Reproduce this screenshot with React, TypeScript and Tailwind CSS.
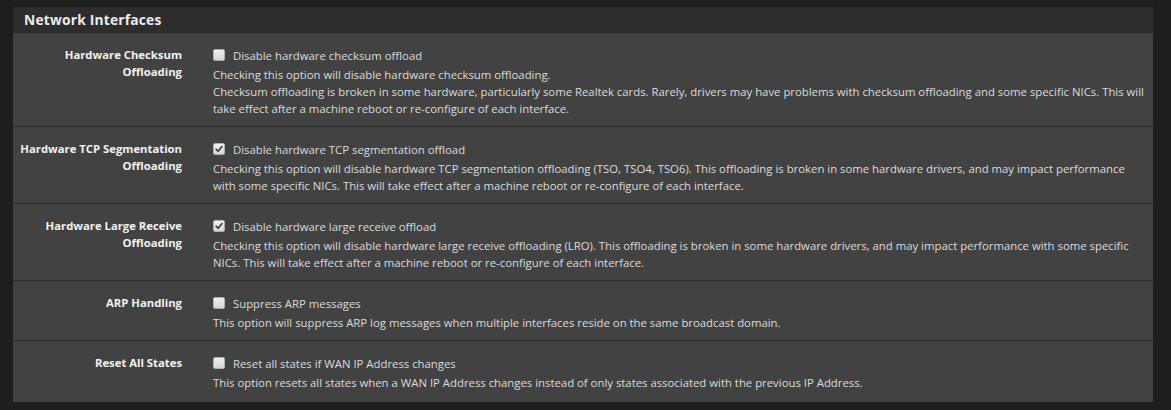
import React from 'react';

type Row = {
  label: string[];
  option: string;
  checked: boolean;
  help: string[];
};

const rows: Row[] = [
  {
    label: ['Hardware Checksum', 'Offloading'],
    option: 'Disable hardware checksum offload',
    checked: false,
    help: [
      'Checking this option will disable hardware checksum offloading.',
      'Checksum offloading is broken in some hardware, particularly some Realtek cards. Rarely, drivers may have problems with checksum offloading and some specific NICs. This will',
      'take effect after a machine reboot or re-configure of each interface.',
    ],
  },
  {
    label: ['Hardware TCP Segmentation', 'Offloading'],
    option: 'Disable hardware TCP segmentation offload',
    checked: true,
    help: [
      'Checking this option will disable hardware TCP segmentation offloading (TSO, TSO4, TSO6). This offloading is broken in some hardware drivers, and may impact performance',
      'with some specific NICs. This will take effect after a machine reboot or re-configure of each interface.',
    ],
  },
  {
    label: ['Hardware Large Receive', 'Offloading'],
    option: 'Disable hardware large receive offload',
    checked: true,
    help: [
      'Checking this option will disable hardware large receive offloading (LRO). This offloading is broken in some hardware drivers, and may impact performance with some specific',
      'NICs. This will take effect after a machine reboot or re-configure of each interface.',
    ],
  },
  {
    label: ['ARP Handling'],
    option: 'Suppress ARP messages',
    checked: false,
    help: ['This option will suppress ARP log messages when multiple interfaces reside on the same broadcast domain.'],
  },
  {
    label: ['Reset All States'],
    option: 'Reset all states if WAN IP Address changes',
    checked: false,
    help: ['This option resets all states when a WAN IP Address changes instead of only states associated with the previous IP Address.'],
  },
];

function Checkbox({ checked }: { checked: boolean }) {
  return (
    <span className="w-[12px] h-[12px] rounded-[2px] bg-gradient-to-b from-[#f0f0f0] to-[#d6d6d6] border border-[#b0b0b0] flex items-center justify-center shrink-0">
      {checked && (
        <svg viewBox="0 0 12 12" className="w-[10px] h-[10px]">
          <path d="M2.5 6.2 L5 8.6 L9.6 3" fill="none" stroke="#333" strokeWidth="1.8" strokeLinecap="round" strokeLinejoin="round" />
        </svg>
      )}
    </span>
  );
}

export default function App() {
  return (
    <div className="w-[1171px] h-[410px] bg-[#1e1e1e] pt-[7px] pl-[13px] font-['Open_Sans',sans-serif] text-[11.35px] leading-[17px]">
      <div className="w-[1140px] bg-[#424242]">
        <div className="h-[26px] bg-[#2d2d2d] border-b border-[#2a2a2a] px-[11px] flex items-center">
          <h2 className="text-[13.8px] font-bold text-[#ececec] tracking-[0.2px]">Network Interfaces</h2>
        </div>
        {rows.map((row, i) => (
          <div
            key={i}
            className={`flex pt-[12px] ${i === rows.length - 1 ? 'pb-[11px]' : 'pb-[9px]'} ${i > 0 ? 'border-t border-[#2b2b2b]' : ''}`}
          >
            <div className="w-[169px] shrink-0 text-right font-bold text-[#f2f2f2] text-[11.3px] pt-[1px]">
              {row.label.map((l, j) => (
                <div key={j}>{l}</div>
              ))}
            </div>
            <div className="pl-[31px] pr-[14px] text-[#dcdcdc]">
              <label className="flex items-center gap-[8px] h-[20px]">
                <Checkbox checked={row.checked} />
                <span>{row.option}</span>
              </label>
              <div className="mt-[1px]">
                {row.help.map((h, j) => (
                  <div key={j} className="whitespace-nowrap">{h}</div>
                ))}
              </div>
            </div>
          </div>
        ))}
      </div>
    </div>
  );
}
